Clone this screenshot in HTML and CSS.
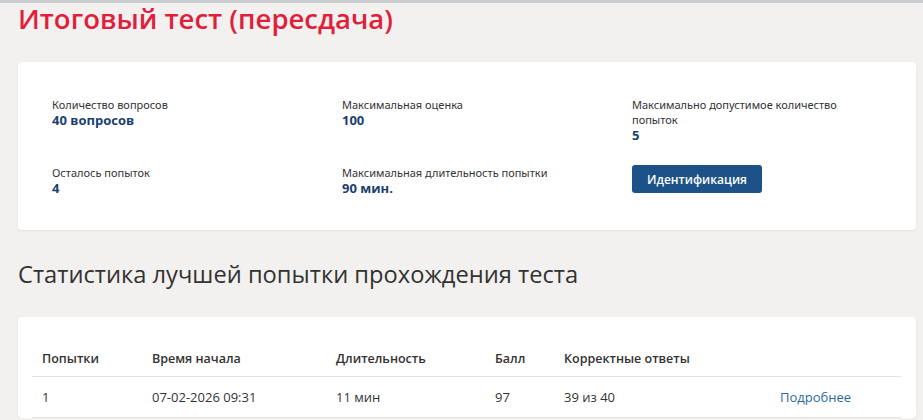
FILE: index.html
```html
<!DOCTYPE html>
<html lang="ru">
<head>
<meta charset="utf-8"/>
<meta content="width=device-width, initial-scale=1.0" name="viewport"/>
<title>Итоговый тест (пересдача)</title>
<link rel="stylesheet" href="styles.css">
</head>
<body>
<div class="topbar"></div>
<div class="page">
<h1 class="test-title">Итоговый тест (пересдача)</h1>

<div class="card info-card">
  <div class="info-grid">
    <div class="field">
      <div class="label">Количество вопросов</div>
      <div class="value">40 вопросов</div>
    </div>
    <div class="field">
      <div class="label">Максимальная оценка</div>
      <div class="value">100</div>
    </div>
    <div class="field">
      <div class="label">Максимально допустимое количество попыток</div>
      <div class="value">5</div>
    </div>
    <div class="field">
      <div class="label">Осталось попыток</div>
      <div class="value">4</div>
    </div>
    <div class="field">
      <div class="label">Максимальная длительность попытки</div>
      <div class="value">90 мин.</div>
    </div>
    <div class="field">
      <button class="btn-primary" type="button">Идентификация</button>
    </div>
  </div>
</div>

<h2 class="section-title">Статистика лучшей попытки прохождения теста</h2>

<div class="card table-card">
  <table class="stats">
    <thead>
      <tr>
        <th class="c-num">Попытки</th>
        <th class="c-start">Время начала</th>
        <th class="c-dur">Длительность</th>
        <th class="c-score">Балл</th>
        <th class="c-correct">Корректные ответы</th>
        <th class="c-link"></th>
      </tr>
    </thead>
    <tbody>
      <tr>
        <td>1</td>
        <td>07-02-2026 09:31</td>
        <td>11 мин</td>
        <td>97</td>
        <td>39 из 40</td>
        <td><a href="#" class="more">Подробнее</a></td>
      </tr>
    </tbody>
  </table>
</div>
</div>
</body>
</html>
```

FILE: styles.css
```css
body {
  margin: 0;
  background: #f2f1ef;
  font-family: "Open Sans", "Noto Sans", sans-serif;
  color: #333;
}
.topbar {
  height: 3px;
  background: #c9ced3;
}
.page {
  padding: 0 7px 0 18px;
}
.test-title {
  margin: 0;
  font-size: 27.5px;
  line-height: 32px;
  font-weight: 600;
  color: #e01f3d;
}
.card {
  background: #fff;
  border-radius: 4px;
  box-shadow: 0 1px 2px rgba(0, 0, 0, 0.08);
}
.info-card {
  margin-top: 27px;
  padding: 35px 34px 34px 34px;
}
.info-grid {
  display: grid;
  grid-template-columns: 290px 290px 230px;
  row-gap: 22px;
}
.label {
  font-family: "Noto Sans", "Open Sans", sans-serif;
  font-size: 11px;
  line-height: 15px;
  color: #333;
}
.value {
  font-size: 13px;
  line-height: 16px;
  font-weight: 700;
  color: #1b3f6e;
}
.btn-primary {
  height: 28px;
  padding: 0 15px;
  border: 0;
  border-radius: 3px;
  background: #1d5288;
  color: #fff;
  font-family: "Open Sans", sans-serif;
  font-size: 12px;
  font-weight: 600;
}
.section-title {
  margin: 29px 0 0 0;
  font-size: 23.7px;
  line-height: 30px;
  font-weight: 400;
  color: #333;
}
.table-card {
  margin-top: 28px;
  padding: 25px 15px 0 14px;
}
.stats {
  width: 100%;
  border-collapse: collapse;
  font-size: 13px;
  line-height: 18px;
  color: #333;
}
.stats th {
  text-align: left;
  font-size: 12.5px;
  font-weight: 600;
  padding: 8px 10px 8px 10px;
  border-bottom: 1px solid #e3e3e3;
}
.stats td {
  padding: 11px 10px 11px 10px;
  border-bottom: 1px solid #e3e3e3;
}
.c-num { width: 90px; }
.c-start { width: 164px; }
.c-dur { width: 139px; }
.c-score { width: 49px; }
.c-correct { width: 196px; }
.more {
  color: #2d6a9f;
  text-decoration: none;
}
```
